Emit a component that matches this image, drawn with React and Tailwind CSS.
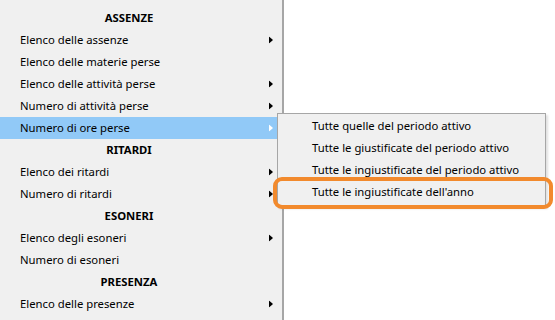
const Arrow = ({ white }) => (
    <svg width="4" height="7" viewBox="0 0 4 7" className="absolute left-[269px] top-1/2 -translate-y-1/2">
        <polygon points="0,0 4,3.5 0,7" fill={white ? "#ffffff" : "#000000"} />
    </svg>
);

const sections = [
    {
        title: "ASSENZE",
        items: [
            { label: "Elenco delle assenze", sub: true },
            { label: "Elenco delle materie perse" },
            { label: "Elenco delle attività perse", sub: true },
            { label: "Numero di attività perse", sub: true },
            { label: "Numero di ore perse", sub: true, active: true },
        ],
    },
    {
        title: "RITARDI",
        items: [
            { label: "Elenco dei ritardi", sub: true },
            { label: "Numero di ritardi", sub: true },
        ],
    },
    {
        title: "ESONERI",
        items: [
            { label: "Elenco degli esoneri", sub: true },
            { label: "Numero di esoneri" },
        ],
    },
    {
        title: "PRESENZA",
        items: [{ label: "Elenco delle presenze", sub: true }],
    },
];

const subItems = [
    "Tutte quelle del periodo attivo",
    "Tutte le giustificate del periodo attivo",
    "Tutte le ingiustificate del periodo attivo",
    "Tutte le ingiustificate dell'anno",
];

export default function App() {
    return (
        <div
            className="relative w-[555px] h-[320px] overflow-hidden bg-white flex text-[11.3px] text-black"
            style={{ fontFamily: '"Noto Sans", "Open Sans", sans-serif' }}
        >
            {/* main menu */}
            <div className="w-[284px] h-full bg-[#f0f0f0] border-r-2 border-[#a6a6a6] pt-[7px]">
                {sections.map((s) => (
                    <div key={s.title}>
                        <div className="h-[22px] w-[258px] flex items-center justify-center font-bold">
                            {s.title}
                        </div>
                        {s.items.map((it) => (
                            <div
                                key={it.label}
                                className={`relative h-[22px] flex items-center pl-[20px] ${
                                    it.active ? "bg-[#91c9f7]" : ""
                                }`}
                            >
                                {it.label}
                                {it.sub && <Arrow white={it.active} />}
                            </div>
                        ))}
                    </div>
                ))}
            </div>

            {/* submenu */}
            <div className="absolute left-[277px] top-[113px] w-[269px] h-[94px] bg-[#f0f0f0] border border-[#a6a6a6] pt-px shadow-[2px_2px_2px_rgba(0,0,0,0.12)]">
                {subItems.map((t) => (
                    <div key={t} className="h-[22px] flex items-center pl-[34px]">
                        {t}
                    </div>
                ))}
            </div>

            {/* highlight ring */}
            <div className="absolute left-[273px] top-[177px] w-[280px] h-[32px] rounded-[9px] border-4 border-[#f28a2d]"></div>
        </div>
    );
}
